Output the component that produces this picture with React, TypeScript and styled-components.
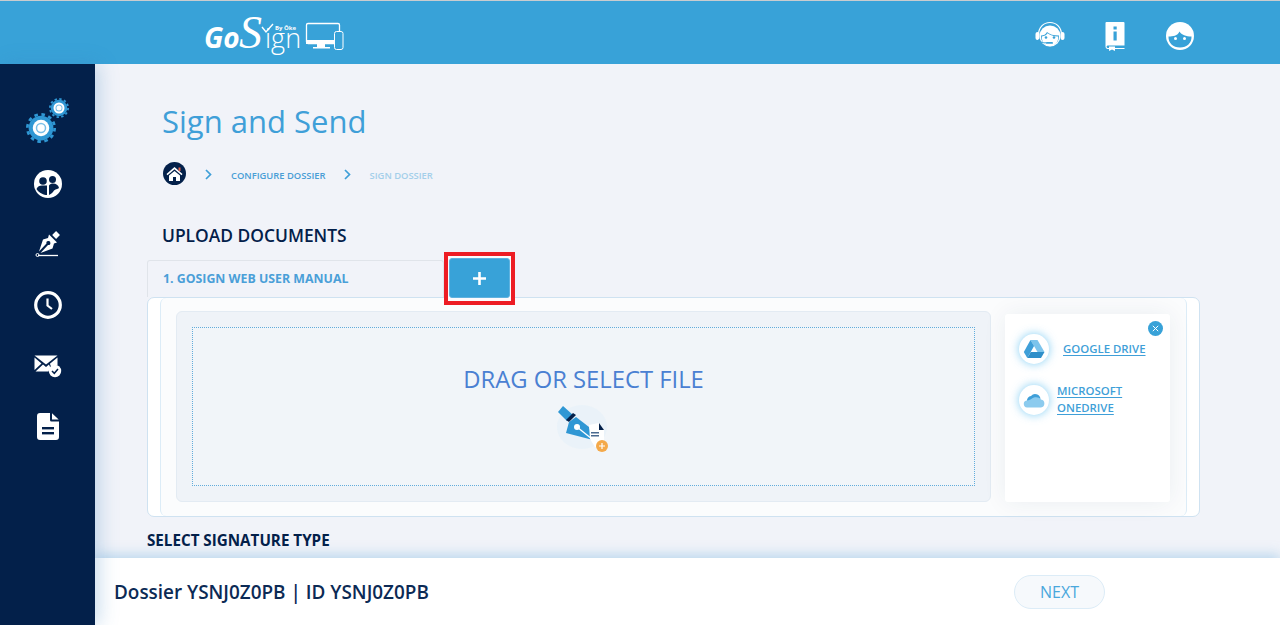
import React from "react";
import styled, { createGlobalStyle } from "styled-components";

const Global = createGlobalStyle`
  html, body { margin: 0; padding: 0; height: 100%; overflow: hidden; background: #f1f3f9; }
  * { box-sizing: border-box; }
  #root { height: 100%; font-family: "Open Sans", "Noto Sans", sans-serif; }
`;

const Page = styled.div`
  display: flex;
  flex-direction: column;
  width: 1280px;
  height: 625px;
  overflow: hidden;
`;
const Header = styled.header`
  flex: 0 0 64px;
  display: flex;
  align-items: center;
  justify-content: space-between;
  background: #38a2d8;
  border-top: 1px solid #c9cccf;
  padding: 0 85px 0 204px;
`;
const LogoSvg = styled.svg`
  display: block;
  width: 142px;
  height: 60px;
`;
const HeaderIcons = styled.div`
  display: flex;
  align-items: center;
  gap: 40px;
  margin-top: 7px;
`;
const Body = styled.div`
  flex: 1;
  display: flex;
  min-height: 0;
`;
const Sidebar = styled.nav`
  flex: 0 0 95px;
  position: relative;
  z-index: 3;
  background: #03204a;
  box-shadow: 4px 0 18px rgba(56, 130, 190, 0.28);
  padding: 29px 0 0 0;
  display: flex;
  flex-direction: column;
  align-items: center;
`;
const GearSlot = styled.div`
  height: 60.6px;
`;
const NavItem = styled.div`
  height: 60.7px;
  display: flex;
  align-items: center;
  justify-content: center;
`;
const Right = styled.div`
  flex: 1;
  min-width: 0;
  display: flex;
  flex-direction: column;
`;
const Main = styled.main`
  flex: 1;
  min-height: 0;
  overflow: hidden;
  padding: 0 80px 0 52px;
  background: #f1f3f9;
`;
const Title = styled.h1`
  margin: 35px 0 0 15px;
  font-size: 31px;
  line-height: 44px;
  font-weight: 500;
  color: #3f9fd8;
`;
const Crumbs = styled.div`
  display: flex;
  align-items: center;
  height: 24px;
  margin: 18px 0 0 16px;
`;
const HomeBadge = styled.span`
  width: 23px;
  height: 23px;
  border-radius: 50%;
  background: #03204a;
  display: flex;
  align-items: center;
  justify-content: center;
  margin-right: 19px;
`;
const CrumbText = styled.span<{ $muted?: boolean }>`
  font-size: 9.4px;
  font-weight: 600;
  color: ${(p) => (p.$muted ? "#a4cfea" : "#4a9ed6")};
  margin: 5px 18px 0 19px;
  white-space: nowrap;
`;
const ChevronIcon = styled.svg`
  display: block;
  margin-top: 3px;
`;
const SectionTitle = styled.h2`
  margin: 38px 0 0 15px;
  font-size: 17.4px;
  line-height: 24px;
  font-weight: 600;
  color: #03204a;
`;
const TabRow = styled.div`
  display: flex;
  align-items: flex-start;
  height: 37px;
  margin-top: 13px;
  position: relative;
  z-index: 1;
`;
const Tab = styled.div`
  flex: 0 0 297px;
  height: 37px;
  border: 1px solid #e0e4ea;
  border-bottom: none;
  border-radius: 3px 3px 0 0;
  padding: 0 0 2px 15px;
  display: flex;
  align-items: center;
  font-size: 12.35px;
  font-weight: 700;
  color: #4a9fd8;
`;
const AddFrame = styled.div`
  width: 71px;
  height: 53px;
  margin-top: -8px;
  border: 4px solid #ed1c24;
  padding: 2px 1px 3px;
  background: #fbfbfd;
`;
const AddButton = styled.button`
  display: flex;
  align-items: center;
  justify-content: center;
  width: 100%;
  height: 100%;
  padding: 0;
  border: 1px solid #5fb2df;
  border-radius: 3px;
  background: #38a2d8;
  color: #fff;
`;
const Panel = styled.section`
  height: 220px;
  padding: 0 12px;
  background: #fff;
  border: 1px solid #cfe2f1;
  border-radius: 7px;
`;
const PanelInner = styled.div`
  height: 218px;
  display: flex;
  gap: 14px;
  padding: 13px 15px 14px 15px;
  background: #fbfcfd;
  border-left: 1px solid #dcecf7;
  border-right: 1px solid #dcecf7;
  border-radius: 6px;
`;
const Drop = styled.div`
  width: 815px;
  padding: 15px 15px;
  background: #eff3f8;
  border: 1px solid #e3ebf3;
  border-radius: 6px;
`;
const DropArea = styled.div`
  height: 159px;
  border: 1px dotted #62acdb;
  background: #f1f5f9;
  display: flex;
  flex-direction: column;
  align-items: center;
  padding-top: 36px;
  color: #4a80d2;
  font-size: 23.8px;
  line-height: 30px;
`;
const PenMark = styled.svg`
  display: block;
  width: 56px;
  height: 52px;
  margin-top: 7px;
`;
const Sources = styled.aside`
  position: relative;
  width: 165px;
  margin-top: 3px;
  background: #fff;
  border-radius: 3px;
  box-shadow: 0 0 24px rgba(30, 50, 90, 0.07);
  padding: 20px 0 0 14px;
`;
const CloseDot = styled.span`
  position: absolute;
  top: 7px;
  right: 7px;
  width: 15px;
  height: 15px;
  border-radius: 50%;
  background: #38a2d8;
  display: flex;
  align-items: center;
  justify-content: center;
`;
const SourceRow = styled.div<{ $gap: number }>`
  display: flex;
  align-items: center;
  gap: ${(p) => p.$gap}px;
  margin-bottom: 20px;
`;
const Glow = styled.span`
  flex: 0 0 30px;
  width: 30px;
  height: 30px;
  border-radius: 50%;
  background: #fff;
  box-shadow: 0 0 10px rgba(90, 190, 240, 0.75);
  display: flex;
  align-items: center;
  justify-content: center;
`;
const SourceLink = styled.a<{ $w: number }>`
  width: ${(p) => p.$w}px;
  margin-top: -2px;
  font-size: 11.4px;
  line-height: 17px;
  font-weight: 600;
  color: #3f9fd8;
  text-decoration: underline;
  text-underline-offset: 2px;
`;
const SignatureTitle = styled.h3`
  margin: 13px 0 0;
  font-size: 15.2px;
  line-height: 20px;
  font-weight: 700;
  color: #03204a;
`;
const Footer = styled.footer`
  flex: 0 0 67px;
  position: relative;
  z-index: 2;
  display: flex;
  align-items: center;
  justify-content: space-between;
  padding: 0 175px 0 19px;
  background: #fff;
  box-shadow: 0 -3px 12px rgba(90, 165, 215, 0.38);
`;
const DossierLabel = styled.div`
  font-size: 18.9px;
  font-weight: 600;
  color: #0c2a55;
  margin-top: 1px;
`;
const NextButton = styled.button`
  width: 91px;
  height: 34px;
  margin-top: 1px;
  border: 1px solid #dcecf7;
  border-radius: 17px;
  background: #f6f9fc;
  color: #4aa8dc;
  font-family: inherit;
  font-size: 16px;
`;

const Gear = ({ size, ...rest }: { size: number } & React.SVGProps<SVGSVGElement>) => (
  <svg width={size} height={size} viewBox="0 0 40 40" {...rest}>
    <circle cx="20" cy="20" r="16.5" fill="#2f97d4" />
    <circle cx="20" cy="20" r="18.2" fill="none" stroke="#2f97d4" strokeWidth="3.6" strokeDasharray="4.76 4.77" />
    <circle cx="20" cy="20" r="11" fill="#fff" />
    <circle cx="20" cy="20" r="7" fill="#7cc0e8" />
    <circle cx="20" cy="20" r="5" fill="#fff" />
  </svg>
);
const GearGroup = styled.div`
  position: relative;
  width: 45px;
  height: 50px;
  margin-left: 4px;
`;
const BigGear = styled(Gear)`
  position: absolute;
  left: -1px;
  top: 20px;
`;
const SmallGear = styled(Gear)`
  position: absolute;
  left: 22px;
  top: 5px;
`;
const Chevron = () => (
  <ChevronIcon width="7" height="11" viewBox="0 0 7 11">
    <path d="M1 1l4.500 4.500L1 10" fill="none" stroke="#3f9fd8" strokeWidth="1.700" />
  </ChevronIcon>
);

const I = {
  headset: (
    <svg width="30" height="30" viewBox="0 0 30 30">
      <path d="M3.500 14C3.500 6.500 8.500 1.500 15 1.500S26.500 6.500 26.500 14" fill="none" stroke="#fff" strokeWidth="1.200" />
      <rect x="0.500" y="11" width="4" height="8" rx="2" fill="#fff" />
      <rect x="25.500" y="11" width="4" height="8" rx="2" fill="#fff" />
      <circle cx="15" cy="15" r="10.500" fill="#fff" />
      <path d="M6 14.500c2.500 0 5-1 6-3.500 2.500 2.500 6.500 3.500 12 3.500.5 6-3.500 10-9 10S5.500 20 6 14.500z" fill="#38a2d8" />
      <path d="M6.800 15.500c2.500-.3 4.800-1.300 5.700-3.200 2.500 2 5.800 3 10.700 3.200.5 5.500-3.300 9.700-8.200 9.700S6.500 21 6.800 15.500z" fill="#fff" />
      <circle cx="11" cy="16.500" r="1.300" fill="#38a2d8" />
      <circle cx="19" cy="16.500" r="1.300" fill="#38a2d8" />
      <rect x="11" y="21" width="7" height="1.800" rx="0.900" fill="#38a2d8" />
      <path d="M4 18c0 3 3 4 7.500 3.800" fill="none" stroke="#38a2d8" strokeWidth="1" />
    </svg>
  ),
  book: (
    <svg width="20" height="30" viewBox="0 0 20 30">
      <path d="M1.500 1h17a1 1 0 0 1 1 1v22.500H2.500a1.300 1.300 0 0 0 0 2.500H4v-1.500h6V27h9.500v1H10v2l-3-1.500L4 30v-2H2.500A2.300 2.300 0 0 1 .5 25.700V2a1 1 0 0 1 1-1z" fill="#fff" />
      <rect x="8.500" y="5.500" width="3.200" height="3" fill="#38a2d8" />
      <rect x="8.500" y="10.500" width="3.200" height="9" fill="#38a2d8" />
    </svg>
  ),
  face: (
    <svg width="30" height="30" viewBox="0 0 30 30">
      <circle cx="15" cy="15" r="14" fill="#fff" />
      <path d="M3.500 15.500c4.500 0 9-.5 11-5 2 3.500 6.500 5 12 5 .3 6.500-4.500 11-11.500 11S3.200 22 3.500 15.500z" fill="#38a2d8" />
      <circle cx="10.500" cy="17.500" r="1.500" fill="#fff" />
      <circle cx="19.500" cy="17.500" r="1.500" fill="#fff" />
    </svg>
  ),
  people: (
    <svg width="28" height="28" viewBox="0 0 28 28">
      <circle cx="14" cy="14" r="14" fill="#fff" />
      <circle cx="9" cy="11" r="3.800" fill="#03204a" />
      <circle cx="18.500" cy="9.500" r="3.500" fill="#03204a" />
      <path d="M2.500 19c1-2.500 3-3.500 5.500-3.500h5v9.500c-3 0-8-2-10.500-6z" fill="#03204a" />
      <path d="M15 25v-9.500c1-1.500 2.500-2 4-2 3 0 5.500 1.500 6 4.500-.5 1-3 1-5 2.500-1 1.500-2.500 3.500-5 4.500z" fill="#03204a" />
    </svg>
  ),
  pen: (
    <svg width="26" height="27" viewBox="0 0 26 27">
      <rect x="18.300" y="1.200" width="5.500" height="5.500" transform="rotate(45 21 4)" fill="#fff" />
      <path d="M14 3.500l8 8-3 1-1.500 5-12 4.500 7.500-8a2 2 0 1 0-1.500-1.400L4 20.500 8 8.500l5-1.500z" fill="#fff" />
      <path d="M3 24.500h20" stroke="#fff" strokeWidth="1.300" />
      <circle cx="2.500" cy="24" r="1.500" fill="none" stroke="#fff" strokeWidth="1" />
    </svg>
  ),
  clock: (
    <svg width="28" height="28" viewBox="0 0 28 28">
      <circle cx="14" cy="14" r="12.300" fill="none" stroke="#fff" strokeWidth="3.200" />
      <path d="M13.500 7.500v7l4.500 3.500" fill="none" stroke="#fff" strokeWidth="2.200" />
    </svg>
  ),
  mail: (
    <svg width="28" height="24" viewBox="0 0 28 24">
      <path d="M.5 1.500h23l-11.500 9z" fill="#fff" />
      <path d="M.5 3.500l7 6-7 6.500zM23.500 3.500V11a8 8 0 0 0-6.300 2L16 10l-.1-.2zM1.500 17.500l7.500-7 3 2.500 3-2.500 1.500 3.500a8 8 0 0 0-2 3.500z" fill="#fff" />
      <circle cx="21" cy="17" r="6.200" fill="#fff" />
      <path d="M18 17l2.300 2.300 3.700-4.300" fill="none" stroke="#03204a" strokeWidth="1.500" />
    </svg>
  ),
  doc: (
    <svg width="22" height="27" viewBox="0 0 22 27">
      <path d="M3 0h10v7a1.500 1.500 0 0 0 1.500 1.500H22V24a3 3 0 0 1-3 3H3a3 3 0 0 1-3-3V3a3 3 0 0 1 3-3z" fill="#fff" />
      <path d="M15 .3L21.700 6.500H15z" fill="#fff" />
      <rect x="5" y="14" width="12" height="2.400" fill="#03204a" />
      <rect x="5" y="19" width="12" height="2.400" fill="#03204a" />
    </svg>
  ),
  home: (
    <svg width="17" height="15" viewBox="0 0 17 15">
      <path d="M8.500 1L.5 8l1 1.200L8.500 3.200l7 6 1-1.200z" fill="#fff" />
      <path d="M3 9.500L8.500 5l5.500 4.500V15H10v-4H7v4H3z" fill="#fff" />
      <rect x="12.500" y="1.500" width="2" height="3.500" fill="#e8624a" />
    </svg>
  ),
  plus: (
    <svg width="15" height="15" viewBox="0 0 15 15">
      <path d="M7.500 1v13M1 7.500h13" stroke="#fff" strokeWidth="2.600" />
    </svg>
  ),
  x: (
    <svg width="7" height="7" viewBox="0 0 7 7">
      <path d="M.8.800l5.400 5.400M6.200.800L.8 6.200" stroke="#fff" strokeWidth="1" />
    </svg>
  ),
  drive: (
    <svg width="22" height="20" viewBox="0 0 22 20">
      <path d="M7.500 1h7l7 12h-7z" fill="#7cc4ec" />
      <path d="M7.500 1L.8 13l3.500 6 6.800-12z" fill="#3f9fd8" />
      <path d="M4.300 19h13.700l3.500-6H7.800z" fill="#2f8fc9" />
    </svg>
  ),
  cloud: (
    <svg width="22" height="15" viewBox="0 0 22 15">
      <path d="M4 8a4.500 4.500 0 0 1 4-5 5.500 5.500 0 0 1 9.500 2.500L9 11z" fill="#3f9fd8" />
      <path d="M4 14.500a3.500 3.500 0 0 1-.5-6.900c3-.5 4-.6 5.500-2 2.500-2 7-2 9 1a4 4 0 0 1 0 7.900z" fill="#8ccbee" />
    </svg>
  ),
};

export default function App() {
  return (
    <Page>
      <Global />
      <Header>
        <LogoSvg viewBox="0 0 142 60">
          <text x="0" y="45" fontFamily="'Open Sans', sans-serif" fontStyle="italic" fontWeight="700" fontSize="28" fill="#fff">Go</text>
          <text x="35" y="45" fontFamily="'Liberation Serif', serif" fontStyle="italic" fontSize="46" fill="#fff">S</text>
          <text x="61" y="45" fontFamily="'Open Sans', sans-serif" fontWeight="300" fontSize="27" fill="#fff">ign</text>
          <path d="M58 24l4 5 7-8" fill="none" stroke="#fff" strokeWidth="1.400" />
          <text x="71" y="27" fontFamily="'Open Sans', sans-serif" fontWeight="700" fontSize="6" fill="#fff">By Ōke</text>
          <rect x="102.500" y="20.500" width="33" height="20" rx="1.500" fill="none" stroke="#fff" strokeWidth="1.300" />
          <rect x="102" y="37" width="34" height="4" fill="#fff" />
          <rect x="113" y="41" width="8" height="3" fill="#fff" />
          <rect x="109" y="44" width="17" height="1.500" fill="#fff" />
          <rect x="130.500" y="28.500" width="8.500" height="18" rx="2" fill="#38a2d8" stroke="#fff" strokeWidth="1" />
        </LogoSvg>
        <HeaderIcons>
          {I.headset}
          {I.book}
          {I.face}
        </HeaderIcons>
      </Header>
      <Body>
        <Sidebar>
          <GearSlot>
            <GearGroup>
              <BigGear size={30} />
              <SmallGear size={20} />
            </GearGroup>
          </GearSlot>
          <NavItem>{I.people}</NavItem>
          <NavItem>{I.pen}</NavItem>
          <NavItem>{I.clock}</NavItem>
          <NavItem>{I.mail}</NavItem>
          <NavItem>{I.doc}</NavItem>
        </Sidebar>
        <Right>
          <Main>
            <Title>Sign and Send</Title>
            <Crumbs>
              <HomeBadge>{I.home}</HomeBadge>
              <Chevron />
              <CrumbText>CONFIGURE DOSSIER</CrumbText>
              <Chevron />
              <CrumbText $muted>SIGN DOSSIER</CrumbText>
            </Crumbs>
            <SectionTitle>UPLOAD DOCUMENTS</SectionTitle>
            <TabRow>
              <Tab>1. GOSIGN WEB USER MANUAL</Tab>
              <AddFrame>
                <AddButton aria-label="Add">{I.plus}</AddButton>
              </AddFrame>
            </TabRow>
            <Panel>
              <PanelInner>
                <Drop>
                  <DropArea>
                    DRAG OR SELECT FILE
                    <PenMark viewBox="0 0 56 52">
                      <ellipse cx="26" cy="26" rx="25" ry="22" fill="#dcedf8" opacity="0.35" />
                      <path d="M2 11l5-6 10 9-6 6z" fill="#2f97d4" />
                      <path d="M10 19l7-7 3 2-7 7z" fill="#03204a" />
                      <path d="M13 21l7-5 13 10 4 13-27-7z" fill="#2f97d4" />
                      <circle cx="21" cy="26" r="3" fill="#fff" />
                      <path d="M21 26l15 12" stroke="#fff" strokeWidth="1.300" />
                      <path d="M33 24l10-2 5 7v17H39l-5-8z" fill="#fff" />
                      <path d="M43 22l5 7h-5z" fill="#03204a" />
                      <rect x="35" y="31" width="8" height="1.500" fill="#4a6a90" />
                      <rect x="35" y="34" width="8" height="1.500" fill="#4a6a90" />
                      <circle cx="46" cy="45" r="6" fill="#f4a94a" />
                      <path d="M46 42v6M43 45h6" stroke="#fff" strokeWidth="1.200" />
                    </PenMark>
                  </DropArea>
                </Drop>
                <Sources>
                  <CloseDot>{I.x}</CloseDot>
                  <SourceRow $gap={14}>
                    <Glow>{I.drive}</Glow>
                    <SourceLink $w={90}>GOOGLE DRIVE</SourceLink>
                  </SourceRow>
                  <SourceRow $gap={8}>
                    <Glow>{I.cloud}</Glow>
                    <SourceLink $w={80}>MICROSOFT ONEDRIVE</SourceLink>
                  </SourceRow>
                </Sources>
              </PanelInner>
            </Panel>
            <SignatureTitle>SELECT SIGNATURE TYPE</SignatureTitle>
          </Main>
          <Footer>
            <DossierLabel>Dossier YSNJ0Z0PB | ID YSNJ0Z0PB</DossierLabel>
            <NextButton>NEXT</NextButton>
          </Footer>
        </Right>
      </Body>
    </Page>
  );
}
